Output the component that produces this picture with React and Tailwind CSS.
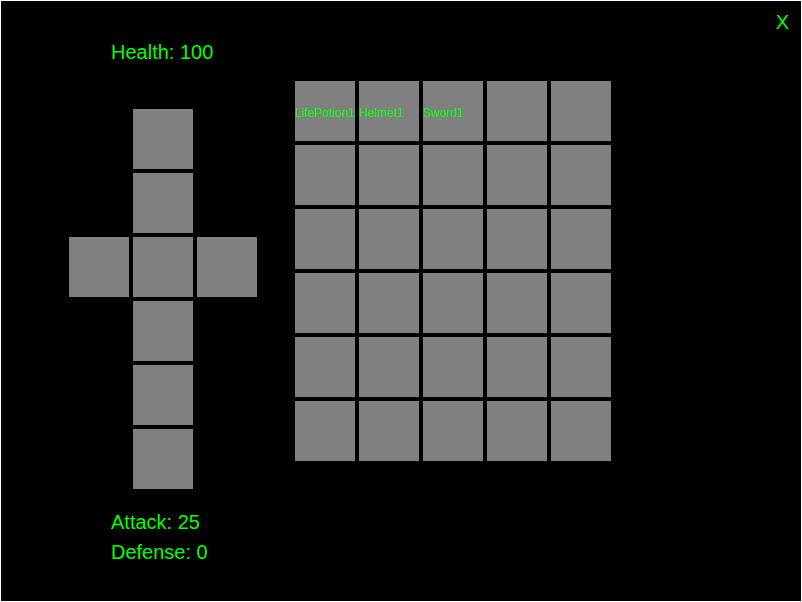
const equipmentSlots = [
  { name: 'Head', place: 'col-start-2 row-start-1' },
  { name: 'Neck', place: 'col-start-2 row-start-2' },
  { name: 'Left hand', place: 'col-start-1 row-start-3' },
  { name: 'Chest', place: 'col-start-2 row-start-3' },
  { name: 'Right hand', place: 'col-start-3 row-start-3' },
  { name: 'Belt', place: 'col-start-2 row-start-4' },
  { name: 'Legs', place: 'col-start-2 row-start-5' },
  { name: 'Feet', place: 'col-start-2 row-start-6' },
];

const items = ['LifePotion1', 'Helmet1', 'Sword1'];
const bag = Array.from({ length: 30 }, (_, i) => items[i] ?? '');

function Slot({ label, children, className = '' }) {
  return (
    <button
      type="button"
      aria-label={label}
      className={`flex size-15 items-center justify-start whitespace-nowrap bg-[#808080] pt-1 text-xs ${className}`}
    >
      {children}
    </button>
  );
}

export default function App() {
  return (
    <main className="flex min-h-screen items-start border border-white bg-black pl-17 pr-3 font-['Liberation_Sans',Arial,sans-serif] text-xl/[30px] text-[#00ff00]">
      <section aria-label="Character" className="pt-9">
        <p className="ml-[42px]">Health: 100</p>
        <div className="mt-[42px] grid grid-cols-[repeat(3,60px)] grid-rows-[repeat(6,60px)] gap-1">
          {equipmentSlots.map((slot) => (
            <Slot key={slot.name} label={slot.name} className={slot.place} />
          ))}
        </div>
        <div className="ml-[42px] mt-[18px]">
          <p>Attack: 25</p>
          <p>Defense: 0</p>
        </div>
      </section>

      <section
        aria-label="Inventory"
        className="ml-[38px] mt-20 grid grid-cols-[repeat(5,60px)] gap-1"
      >
        {bag.map((item, i) => (
          <Slot key={i} label={item || `Empty slot ${i + 1}`}>
            {item}
          </Slot>
        ))}
      </section>

      <button type="button" aria-label="Close" className="ml-auto mt-1.5">
        X
      </button>
    </main>
  );
}
